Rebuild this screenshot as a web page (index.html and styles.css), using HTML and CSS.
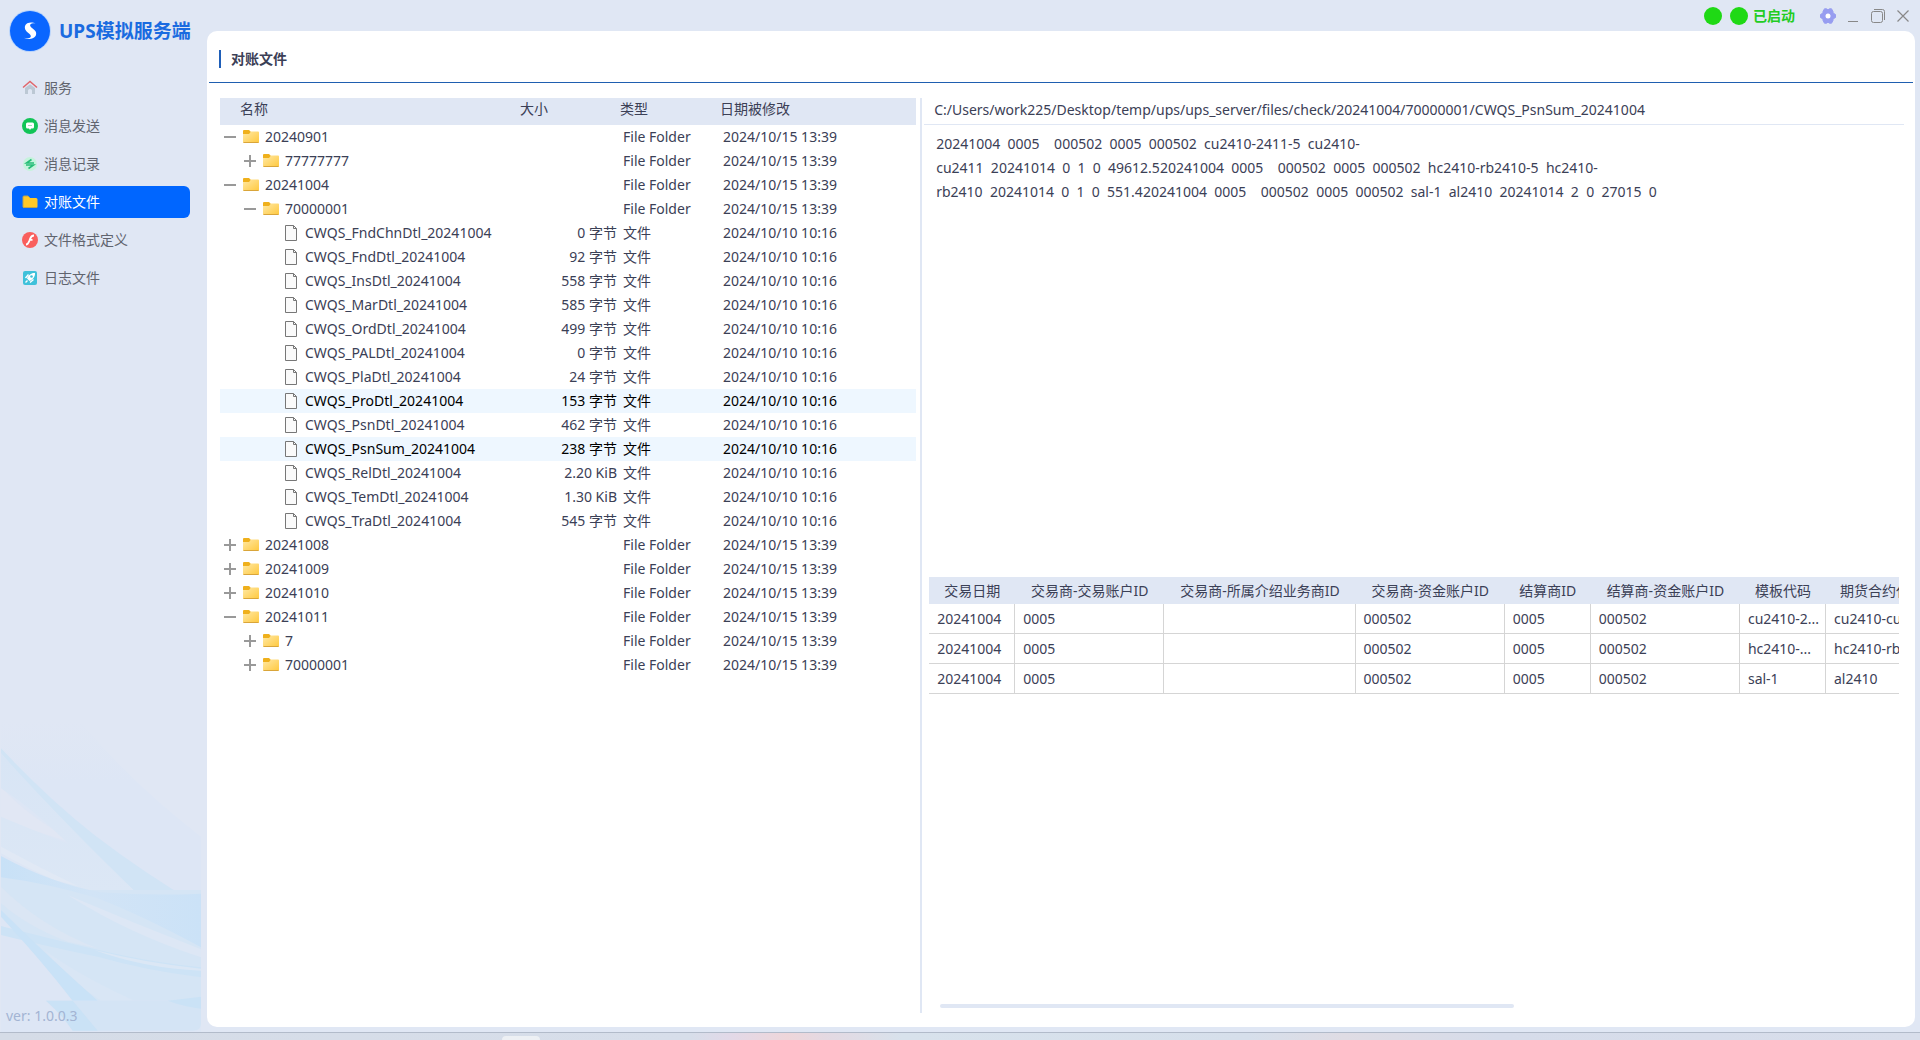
FILE: index.html
```html
<!DOCTYPE html>
<html lang="zh-CN">
<head>
    <meta charset="UTF-8">
    <title>UPS模拟服务端</title>
    <link rel="stylesheet" href="styles.css">
</head>
<body>
    <!-- 公用图标 -->
    <svg class="defs" width="0" height="0">
        <defs>
            <linearGradient id="folderFill" x1="0" y1="0" x2="1" y2="1">
                <stop offset="0" stop-color="#ffe9a6"/>
                <stop offset="1" stop-color="#ffc83d"/>
            </linearGradient>
        </defs>
        <symbol id="folder" viewBox="0 0 16 16">
            <path d="M0 2Q0 1 1 1H6L8 3V6H0Z" fill="#efb01c"/>
            <path d="M0 5H6L8 2.500H15.200Q16 2.500 16 3.500V13Q16 14 15 14H1Q0 14 0 13Z" fill="url(#folderFill)"/>
            <path d="M0.500 13.500H15.500" stroke="#d9a53a" stroke-width="1"/>
        </symbol>
        <symbol id="file" viewBox="0 0 16 16">
            <path d="M2.500 0.500H10.500L13.500 3.500V15.500H2.500Z" fill="#fafafa" stroke="#777"/>
            <path d="M10.500 0.500V3.500H13.500" fill="none" stroke="#777"/>
        </symbol>
        <symbol id="plus" viewBox="0 0 12 12">
            <path d="M0 6H12M6 0V12" stroke="#999" stroke-width="2"/>
        </symbol>
        <symbol id="minus" viewBox="0 0 12 12">
            <path d="M0 6H12" stroke="#999" stroke-width="2"/>
        </symbol>
    </svg>

    <div class="app">
        <!-- 左侧导航 -->
        <aside class="sidebar">
            <svg class="waves" viewBox="0 0 600 936" preserveAspectRatio="none">
                <defs>
                    <linearGradient id="top" x1="0" y1="0" x2="0" y2="1">
                        <stop offset="0" stop-color="#e0e7f4"/>
                        <stop offset="0.200" stop-color="#dde6f5"/>
                    </linearGradient>
                    <linearGradient id="fade" x1="0" y1="0" x2="0" y2="1">
                        <stop offset="0" stop-color="#d8e5f5"/>
                        <stop offset="1" stop-color="#dce7f5"/>
                    </linearGradient>
                    <linearGradient id="ribbon" x1="0" y1="0" x2="1" y2="0">
                        <stop offset="0" stop-color="#c8e1f7"/>
                        <stop offset="0.450" stop-color="#d2e4f6"/>
                        <stop offset="1" stop-color="#cbe2f7"/>
                    </linearGradient>
                </defs>
                <path d="M0 0H235Q380 180 600 350V936H0Z" fill="url(#top)"/>
                <path d="M0 200Q90 300 250 380L0 300Z" fill="#e1e7f4"/>
                <path d="M0 85Q140 235 280 345Q430 460 600 560V620L420 530Q230 370 0 100Z" fill="#d1e4f5"/>
                <path d="M0 100Q180 300 410 522L230 510L0 380V290Q120 340 200 370Q100 270 0 205Z" fill="url(#fade)"/>
                <path d="M0 470L250 510H600V842H215Q110 680 0 570Z" fill="#d5e5f5"/>
                <path d="M0 380Q110 440 230 498L160 480Q70 440 0 400Z" fill="#e1e9f5"/>
                <path d="M0 408Q150 490 300 517Q450 528 600 521V682Q430 590 290 535Q140 490 0 472Z" fill="url(#ribbon)"/>
                <path d="M200 525Q400 610 600 688V712Q380 640 200 525Z" fill="#dde7f5"/>
                <path d="M0 500Q120 620 290 685L200 665Q80 620 0 550Z" fill="#dbe6f4"/>
                <path d="M0 618Q200 670 360 705Q480 730 600 742V772Q430 750 290 710Q140 680 0 645Z" fill="#cde3f6"/>
                <path d="M280 690Q440 730 600 746V752Q430 745 280 690Z" fill="#dbe7f5"/>
                <path d="M130 690Q240 770 400 842H300Q200 780 130 690Z" fill="#d9e6f5"/>
                <path d="M0 570Q130 700 290 842H215Q120 720 0 590Z" fill="#c9e2f7"/>
                <path d="M215 842H600V910Q600 932 578 932H215Q180 880 135 842Z" fill="#d4e4f5"/>
                <path d="M135 842H215L290 932H215Q180 880 135 842Z" fill="#cae2f6"/>
                <path d="M500 842L600 830V866Q550 860 500 842Z" fill="#cae2f6"/>
            </svg>

            <div class="brand">
                <svg class="logo" viewBox="0 0 44 44">
                    <circle cx="22" cy="22" r="21" fill="#9cc6ff" opacity="0.600"/>
                    <circle cx="22" cy="22" r="20" fill="#0a66ff"/>
                    <path d="M27.500 14.500C24.500 12.800 18 13 17 17C16.200 20.500 18.500 22.500 21 24.500C23.500 26.500 23.500 28.500 20.500 29.300C19 29.600 17.200 29.200 16 28.800C19 31 26.500 30.500 28 26C29 22.500 26.500 21 24 19C21.500 17 21.500 15.300 24 14.600C25.200 14.200 26.500 14.300 27.500 14.500Z" fill="#fff"/>
                </svg>
                <h1>UPS模拟服务端</h1>
            </div>

            <nav class="menu">
                <a href="#">
                    <svg viewBox="0 0 16 16">
                        <path d="M3 8L8 4.200L13 8V14H10V10.500Q10 9 8 9T6 10.500V14H3Z" fill="#bcc8d4"/>
                        <path d="M1 7.500L8 1.500L15 7.500" fill="none" stroke="#e0666b" stroke-width="1.500"/>
                    </svg>
                    服务
                </a>
                <a href="#">
                    <svg viewBox="0 0 16 16">
                        <circle cx="8" cy="8" r="8" fill="#12c457"/>
                        <path d="M5.500 4.500H10.500Q12 4.500 12 6V9Q12 10.500 10.500 10.500H9L8 12L7 10.500H5.500Q4 10.500 4 9V6Q4 4.500 5.500 4.500Z" fill="#fff"/>
                        <path d="M6 7.500H10" stroke="#9be5b8"/>
                    </svg>
                    消息发送
                </a>
                <a href="#">
                    <svg viewBox="0 0 16 16">
                        <circle cx="8" cy="8" r="7" fill="#c5f3dc"/>
                        <path d="M9.500 3.500L4.500 7H12M4 9H11.500L6.500 12.500" fill="none" stroke="#25bd77" stroke-width="1.600"/>
                    </svg>
                    消息记录
                </a>
                <a href="#" class="active">
                    <svg viewBox="0 0 16 16">
                        <path d="M1 3Q1 2 2 2H6L8 4H14Q15.500 4 15.500 5.500V12.500Q15.500 14 14 14H2Q1 14 1 13Z" fill="#ffc929"/>
                        <path d="M1 13V3Q1 2 2 2H6L8 4M1 13.500H15" fill="none" stroke="#b9a452"/>
                    </svg>
                    对账文件
                </a>
                <a href="#">
                    <svg viewBox="0 0 16 16">
                        <circle cx="8" cy="8" r="8" fill="#f95f5d"/>
                        <path d="M12 3.500C8.500 3.500 8.500 6 7.500 8.500C6.500 11 6 12.500 4 12.500M7 7.800H10.500" fill="none" stroke="#fff" stroke-width="1.800"/>
                    </svg>
                    文件格式定义
                </a>
                <a href="#">
                    <svg viewBox="0 0 16 16">
                        <rect x="1" y="1" width="14" height="14" rx="2" fill="#3fc1da"/>
                        <path d="M13 3C9.500 2.500 6 5.500 5 8.500L7.500 11C10.500 10 13.500 6.500 13 3Z" fill="#fff"/>
                        <path d="M3.500 8L6.500 4.500M8 12.500L11.500 9.500M3.500 12.500L5.500 10.500" fill="none" stroke="#fff" stroke-width="1.400"/>
                        <circle cx="9.500" cy="6.500" r="1.300" fill="#3fc1da"/>
                    </svg>
                    日志文件
                </a>
            </nav>

            <div class="version">ver: 1.0.0.3</div>
        </aside>

        <main class="main">
            <!-- 标题栏 -->
            <header class="titlebar">
                <span class="dot"></span>
                <span class="dot"></span>
                <span class="status">已启动</span>
                <div class="window-buttons">
                    <button type="button" aria-label="设置">
                        <svg viewBox="0 0 16 16">
                            <path d="M4.500 0.800H6.500L8 1.800L9.500 0.800H11.500L13 3.500L13 5L15.500 6.500V9.500L13 11V12.500L11.500 15.200H9.500L8 14.200L6.500 15.200H4.500L3 12.500V11L0.500 9.500V6.500L3 5V3.500Z" fill="#979df0" stroke="#979df0" stroke-linejoin="round"/>
                            <circle cx="8" cy="8" r="2.500" fill="#fff"/>
                        </svg>
                    </button>
                    <button type="button" aria-label="最小化">
                        <svg viewBox="0 0 16 16"><path d="M3 13.500H13" stroke="#888"/></svg>
                    </button>
                    <button type="button" aria-label="还原">
                        <svg viewBox="0 0 16 16">
                            <rect x="1.500" y="3.500" width="11" height="11" rx="2" fill="none" stroke="#888"/>
                            <path d="M4 1.500H12.500Q14.500 1.500 14.500 3.500V12" fill="none" stroke="#888"/>
                        </svg>
                    </button>
                    <button type="button" aria-label="关闭">
                        <svg viewBox="0 0 16 16"><path d="M2.500 2.500L13.500 13.500M13.500 2.500L2.500 13.500" stroke="#888" stroke-width="1.200"/></svg>
                    </button>
                </div>
            </header>

            <section class="panel">
                <h2>对账文件</h2>
                <div class="split">
                    <!-- 文件树 -->
                    <div class="tree-pane">
                        <table class="tree">
                            <colgroup>
                                <col class="col-name"><col class="col-size"><col class="col-type"><col>
                            </colgroup>
                            <thead>
                                <tr><th>名称</th><th>大小</th><th>类型</th><th>日期被修改</th></tr>
                            </thead>
                            <tbody>
                                <tr><td><div class="node"><svg class="toggle"><use href="#minus"/></svg><svg class="icon"><use href="#folder"/></svg>20240901</div></td><td></td><td>File Folder</td><td>2024/10/15 13:39</td></tr>
                                <tr><td><div class="node level1"><svg class="toggle"><use href="#plus"/></svg><svg class="icon"><use href="#folder"/></svg>77777777</div></td><td></td><td>File Folder</td><td>2024/10/15 13:39</td></tr>
                                <tr><td><div class="node"><svg class="toggle"><use href="#minus"/></svg><svg class="icon"><use href="#folder"/></svg>20241004</div></td><td></td><td>File Folder</td><td>2024/10/15 13:39</td></tr>
                                <tr><td><div class="node level1"><svg class="toggle"><use href="#minus"/></svg><svg class="icon"><use href="#folder"/></svg>70000001</div></td><td></td><td>File Folder</td><td>2024/10/15 13:39</td></tr>
                                <tr><td><div class="node leaf"><svg class="icon"><use href="#file"/></svg>CWQS_FndChnDtl_20241004</div></td><td>0 字节</td><td>文件</td><td>2024/10/10 10:16</td></tr>
                                <tr><td><div class="node leaf"><svg class="icon"><use href="#file"/></svg>CWQS_FndDtl_20241004</div></td><td>92 字节</td><td>文件</td><td>2024/10/10 10:16</td></tr>
                                <tr><td><div class="node leaf"><svg class="icon"><use href="#file"/></svg>CWQS_InsDtl_20241004</div></td><td>558 字节</td><td>文件</td><td>2024/10/10 10:16</td></tr>
                                <tr><td><div class="node leaf"><svg class="icon"><use href="#file"/></svg>CWQS_MarDtl_20241004</div></td><td>585 字节</td><td>文件</td><td>2024/10/10 10:16</td></tr>
                                <tr><td><div class="node leaf"><svg class="icon"><use href="#file"/></svg>CWQS_OrdDtl_20241004</div></td><td>499 字节</td><td>文件</td><td>2024/10/10 10:16</td></tr>
                                <tr><td><div class="node leaf"><svg class="icon"><use href="#file"/></svg>CWQS_PALDtl_20241004</div></td><td>0 字节</td><td>文件</td><td>2024/10/10 10:16</td></tr>
                                <tr><td><div class="node leaf"><svg class="icon"><use href="#file"/></svg>CWQS_PlaDtl_20241004</div></td><td>24 字节</td><td>文件</td><td>2024/10/10 10:16</td></tr>
                                <tr class="selected"><td><div class="node leaf"><svg class="icon"><use href="#file"/></svg>CWQS_ProDtl_20241004</div></td><td>153 字节</td><td>文件</td><td>2024/10/10 10:16</td></tr>
                                <tr><td><div class="node leaf"><svg class="icon"><use href="#file"/></svg>CWQS_PsnDtl_20241004</div></td><td>462 字节</td><td>文件</td><td>2024/10/10 10:16</td></tr>
                                <tr class="selected"><td><div class="node leaf"><svg class="icon"><use href="#file"/></svg>CWQS_PsnSum_20241004</div></td><td>238 字节</td><td>文件</td><td>2024/10/10 10:16</td></tr>
                                <tr><td><div class="node leaf"><svg class="icon"><use href="#file"/></svg>CWQS_RelDtl_20241004</div></td><td>2.20 KiB</td><td>文件</td><td>2024/10/10 10:16</td></tr>
                                <tr><td><div class="node leaf"><svg class="icon"><use href="#file"/></svg>CWQS_TemDtl_20241004</div></td><td>1.30 KiB</td><td>文件</td><td>2024/10/10 10:16</td></tr>
                                <tr><td><div class="node leaf"><svg class="icon"><use href="#file"/></svg>CWQS_TraDtl_20241004</div></td><td>545 字节</td><td>文件</td><td>2024/10/10 10:16</td></tr>
                                <tr><td><div class="node"><svg class="toggle"><use href="#plus"/></svg><svg class="icon"><use href="#folder"/></svg>20241008</div></td><td></td><td>File Folder</td><td>2024/10/15 13:39</td></tr>
                                <tr><td><div class="node"><svg class="toggle"><use href="#plus"/></svg><svg class="icon"><use href="#folder"/></svg>20241009</div></td><td></td><td>File Folder</td><td>2024/10/15 13:39</td></tr>
                                <tr><td><div class="node"><svg class="toggle"><use href="#plus"/></svg><svg class="icon"><use href="#folder"/></svg>20241010</div></td><td></td><td>File Folder</td><td>2024/10/15 13:39</td></tr>
                                <tr><td><div class="node"><svg class="toggle"><use href="#minus"/></svg><svg class="icon"><use href="#folder"/></svg>20241011</div></td><td></td><td>File Folder</td><td>2024/10/15 13:39</td></tr>
                                <tr><td><div class="node level1"><svg class="toggle"><use href="#plus"/></svg><svg class="icon"><use href="#folder"/></svg>7</div></td><td></td><td>File Folder</td><td>2024/10/15 13:39</td></tr>
                                <tr><td><div class="node level1"><svg class="toggle"><use href="#plus"/></svg><svg class="icon"><use href="#folder"/></svg>70000001</div></td><td></td><td>File Folder</td><td>2024/10/15 13:39</td></tr>
                            </tbody>
                        </table>
                    </div>

                    <!-- 文件内容 -->
                    <div class="detail-pane">
                        <label class="path" for="content">C:/Users/work225/Desktop/temp/ups/ups_server/files/check/20241004/70000001/CWQS_PsnSum_20241004</label>
                        <textarea id="content" class="content" readonly>20241004  0005    000502  0005  000502  cu2410-2411-5  cu2410-
cu2411  20241014  0  1  0  49612.520241004  0005    000502  0005  000502  hc2410-rb2410-5  hc2410-
rb2410  20241014  0  1  0  551.420241004  0005    000502  0005  000502  sal-1  al2410  20241014  2  0  27015  0</textarea>
                        <div class="grid-wrap">
                            <table class="grid">
                                <colgroup>
                                    <col class="w-s"><col class="w-l"><col class="w-xl"><col class="w-l"><col class="w-s"><col class="w-l"><col class="w-s"><col class="w-l">
                                </colgroup>
                                <thead>
                                    <tr><th>交易日期</th><th>交易商-交易账户ID</th><th>交易商-所属介绍业务商ID</th><th>交易商-资金账户ID</th><th>结算商ID</th><th>结算商-资金账户ID</th><th>模板代码</th><th class="last">期货合约代码</th></tr>
                                </thead>
                                <tbody>
                                    <tr><td>20241004</td><td>0005</td><td></td><td>000502</td><td>0005</td><td>000502</td><td>cu2410-2...</td><td>cu2410-cu2411</td></tr>
                                    <tr><td>20241004</td><td>0005</td><td></td><td>000502</td><td>0005</td><td>000502</td><td>hc2410-...</td><td>hc2410-rb2410</td></tr>
                                    <tr><td>20241004</td><td>0005</td><td></td><td>000502</td><td>0005</td><td>000502</td><td>sal-1</td><td>al2410</td></tr>
                                </tbody>
                            </table>
                        </div>
                        <div class="scrollbar"><div class="thumb"></div></div>
                    </div>
                </div>
            </section>
        </main>
    </div>
    <div class="taskbar"><span class="task"></span></div>
</body>
</html>
```

FILE: styles.css
```css
* {
    box-sizing: border-box;
}
body {
    margin: 0;
    height: 100vh;
    display: flex;
    flex-direction: column;
    overflow: hidden;
    background: #e0e7f4;
    color: #3b4056;
    font-family: 'Noto Sans', 'Noto Sans CJK SC', sans-serif;
    font-size: 14px;
    line-height: 24px;
}
.defs {
    position: absolute;
}
.app {
    flex: 1;
    min-height: 0;
    display: flex;
    border-bottom: 1px solid #b2bbca;
}

/* 左侧导航 */
.sidebar {
    position: relative;
    width: 207px;
    display: flex;
    flex-direction: column;
}
.waves {
    position: absolute;
    left: 1px;
    bottom: 0;
    width: 200px;
    height: 312px;
}
.brand {
    display: flex;
    align-items: center;
    gap: 7px;
    padding: 9px 0 0 8px;
}
.logo {
    width: 44px;
    height: 44px;
}
.brand h1 {
    margin: 0;
    font-size: 19px;
    font-weight: bold;
    color: #1a6be0;
    white-space: nowrap;
}
.menu {
    display: flex;
    flex-direction: column;
    gap: 6px;
    margin: 19px 17px 0 12px;
}
.menu a {
    display: flex;
    align-items: center;
    gap: 6px;
    height: 32px;
    padding-left: 10px;
    border-radius: 6px;
    color: #60646e;
    text-decoration: none;
}
.menu svg {
    width: 16px;
    height: 16px;
}
.menu .active {
    background: #0066ff;
    color: #fff;
}
.version {
    position: relative;
    margin-top: auto;
    padding: 0 0 4px 6px;
    color: #a3b4d3;
}

/* 标题栏 */
.main {
    flex: 1;
    min-width: 0;
    display: flex;
    flex-direction: column;
    padding: 0 5px 5px 0;
}
.titlebar {
    height: 31px;
    display: flex;
    align-items: center;
    justify-content: flex-end;
    gap: 8px;
}
.dot {
    width: 18px;
    height: 18px;
    border-radius: 50%;
    background: #1fd915;
}
.status {
    margin-left: -3px;
    color: #22cc22;
    font-weight: bold;
}
.window-buttons {
    display: flex;
    gap: 9px;
    margin-left: 17px;
    padding-right: 4px;
}
.window-buttons button {
    width: 16px;
    height: 16px;
    padding: 0;
    border: 0;
    background: none;
}
.window-buttons svg {
    display: block;
    width: 16px;
    height: 16px;
}

/* 内容面板 */
.panel {
    flex: 1;
    min-height: 0;
    display: flex;
    flex-direction: column;
    padding: 0 2px;
    background: #fff;
    border-radius: 10px;
}
.panel h2 {
    display: flex;
    align-items: center;
    gap: 10px;
    height: 52px;
    margin: 0;
    padding: 4px 10px 0;
    border-bottom: 1px solid #1f5fb0;
    font-size: 14px;
    font-weight: bold;
}
.panel h2::before {
    content: "";
    width: 2px;
    height: 18px;
    background: #1f5fb8;
}
.split {
    flex: 1;
    min-height: 0;
    display: flex;
    padding: 15px 9px 14px 11px;
}
.tree-pane {
    flex: 702;
    min-width: 0;
    padding-right: 4px;
    border-right: 2px solid #e0e7f4;
}
.tree {
    width: 100%;
    table-layout: fixed;
    border-collapse: collapse;
}
.col-name {
    width: 300px;
}
.col-size,
.col-type {
    width: 100px;
}
.tree th {
    height: 27px;
    padding: 0 0 5px;
    background: #e0e7f4;
    font-weight: normal;
    line-height: 22px;
    text-align: left;
}
.tree th:first-child {
    padding-left: 20px;
}
.tree td {
    height: 24px;
    padding: 0 3px;
    white-space: nowrap;
}
.tree td:first-child {
    padding: 0;
}
.tree td:nth-child(2) {
    text-align: right;
}
.tree .selected {
    background: #eef7ff;
    color: #000;
}
.node {
    display: flex;
    align-items: center;
}
.node.level1 {
    padding-left: 20px;
}
.node.leaf {
    padding-left: 60px;
}
.toggle {
    width: 12px;
    height: 12px;
    margin: 0 4px;
}
.icon {
    width: 16px;
    height: 16px;
    margin: 0 6px 0 3px;
}

.detail-pane {
    flex: 988;
    min-width: 0;
    display: flex;
    flex-direction: column;
    padding-left: 2px;
}
.path {
    height: 27px;
    padding-left: 10px;
    border-bottom: 1px solid #e0e7f4;
    white-space: nowrap;
}
.content {
    flex: 1;
    min-height: 0;
    padding: 7px 12px;
    border: 0;
    outline: 0;
    resize: none;
    overflow: hidden;
    color: inherit;
    font: inherit;
    white-space: pre;
}
.grid-wrap {
    flex: 0 0 427px;
    margin: 0 5px;
    overflow: hidden;
}
.grid {
    width: 1046px;
    table-layout: fixed;
    border-collapse: separate;
    border-spacing: 0;
}
.w-s {
    width: 86px;
}
.w-l {
    width: 149px;
}
.w-xl {
    width: 191px;
}
.grid th {
    height: 27px;
    padding: 0;
    background: #e0e7f4;
    font-weight: normal;
    text-align: center;
    white-space: nowrap;
}
.grid th.last {
    padding-left: 14px;
    text-align: left;
}
.grid td {
    height: 30px;
    padding: 0 4px 0 8px;
    border-right: 1px solid #d5d5d5;
    border-bottom: 1px solid #d5d5d5;
    white-space: nowrap;
    overflow: hidden;
    text-overflow: ellipsis;
}
.scrollbar {
    height: 9px;
    padding: 0 8px 5px 16px;
}
.thumb {
    width: 60%;
    height: 4px;
    border-radius: 2px;
    background: #e0e7f4;
}

/* 底部任务栏 */
.taskbar {
    height: 7px;
    background: linear-gradient(90deg, #d5dce7 0%, #d7deea 36%, #e2d9e8 38%, #eed6da 41%, #e4d9e2 43%, #d8e2ec 47%, #d6dfeb 65%, #dfdce4 70%, #d6dcea 78%, #d8deeb 100%);
}
.task {
    display: block;
    width: 38px;
    height: 4px;
    margin: 3px 0 0 502px;
    border-radius: 4px 4px 0 0;
    background: #edf0f4;
}
```
